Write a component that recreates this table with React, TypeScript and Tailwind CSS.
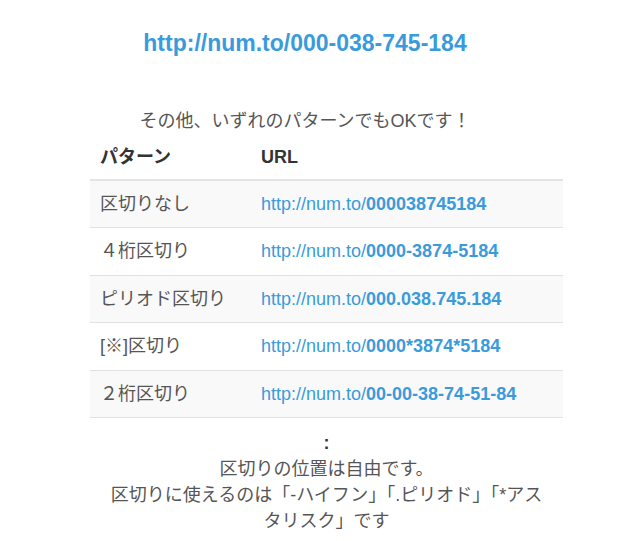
import React from "react";

const rows: { label: string; num: string; h: string }[] = [
  { label: "区切りなし", num: "000038745184", h: "h-[47px]" },
  { label: "４桁区切り", num: "0000-3874-5184", h: "h-[48px]" },
  { label: "ピリオド区切り", num: "000.038.745.184", h: "h-[47px]" },
  { label: "[※]区切り", num: "0000*3874*5184", h: "h-[48px]" },
  { label: "２桁区切り", num: "00-00-38-74-51-84", h: "h-[47px]" },
];

export default function App() {
  return (
    <div
      className="w-[640px] h-[541px] bg-white overflow-hidden"
      style={{ fontFamily: '"Liberation Sans", "Noto Sans CJK JP", sans-serif' }}
    >
      <div className="pt-[28px] pr-[30px] text-center text-[23px] leading-[30px] font-bold text-[#3a9bdc]">
        http://num.to/000-038-745-184
      </div>
      <div className="mt-[50px] pr-[30px] text-center text-[18px] leading-[26px] text-[#555]">
        その他、いずれのパターンでもOKです！
      </div>
      <div className="mx-[90px] w-[473px]">
        <div className="flex h-[47px] items-center border-b-2 border-[#e4e4e4] text-[18px] font-bold text-[#333]">
          <div className="w-[161px] px-[10px] pt-[2px]">パターン</div>
          <div className="px-[10px] pt-[2px]">URL</div>
        </div>
        {rows.map((r, i) => (
          <div
            key={i}
            className={`flex ${r.h} items-center border-b border-[#e2e2e2] text-[18px] ${
              i % 2 === 0 ? "bg-[#f9f9f9]" : "bg-white"
            }`}
          >
            <div className="w-[161px] px-[10px] text-[#555] whitespace-nowrap">{r.label}</div>
            <div className="px-[10px] text-[#3a9bdc] whitespace-nowrap">
              http://num.to/<span className="font-bold">{r.num}</span>
            </div>
          </div>
        ))}
        <div className="mt-[12px] text-center text-[18px] leading-[26px] text-[#555]">
          <div className="font-bold text-[#333]">:</div>
          <div>区切りの位置は自由です。</div>
          <div className="whitespace-nowrap">区切りに使えるのは「-ハイフン」「.ピリオド」「*アス</div>
          <div>タリスク」です</div>
        </div>
      </div>
    </div>
  );
}
